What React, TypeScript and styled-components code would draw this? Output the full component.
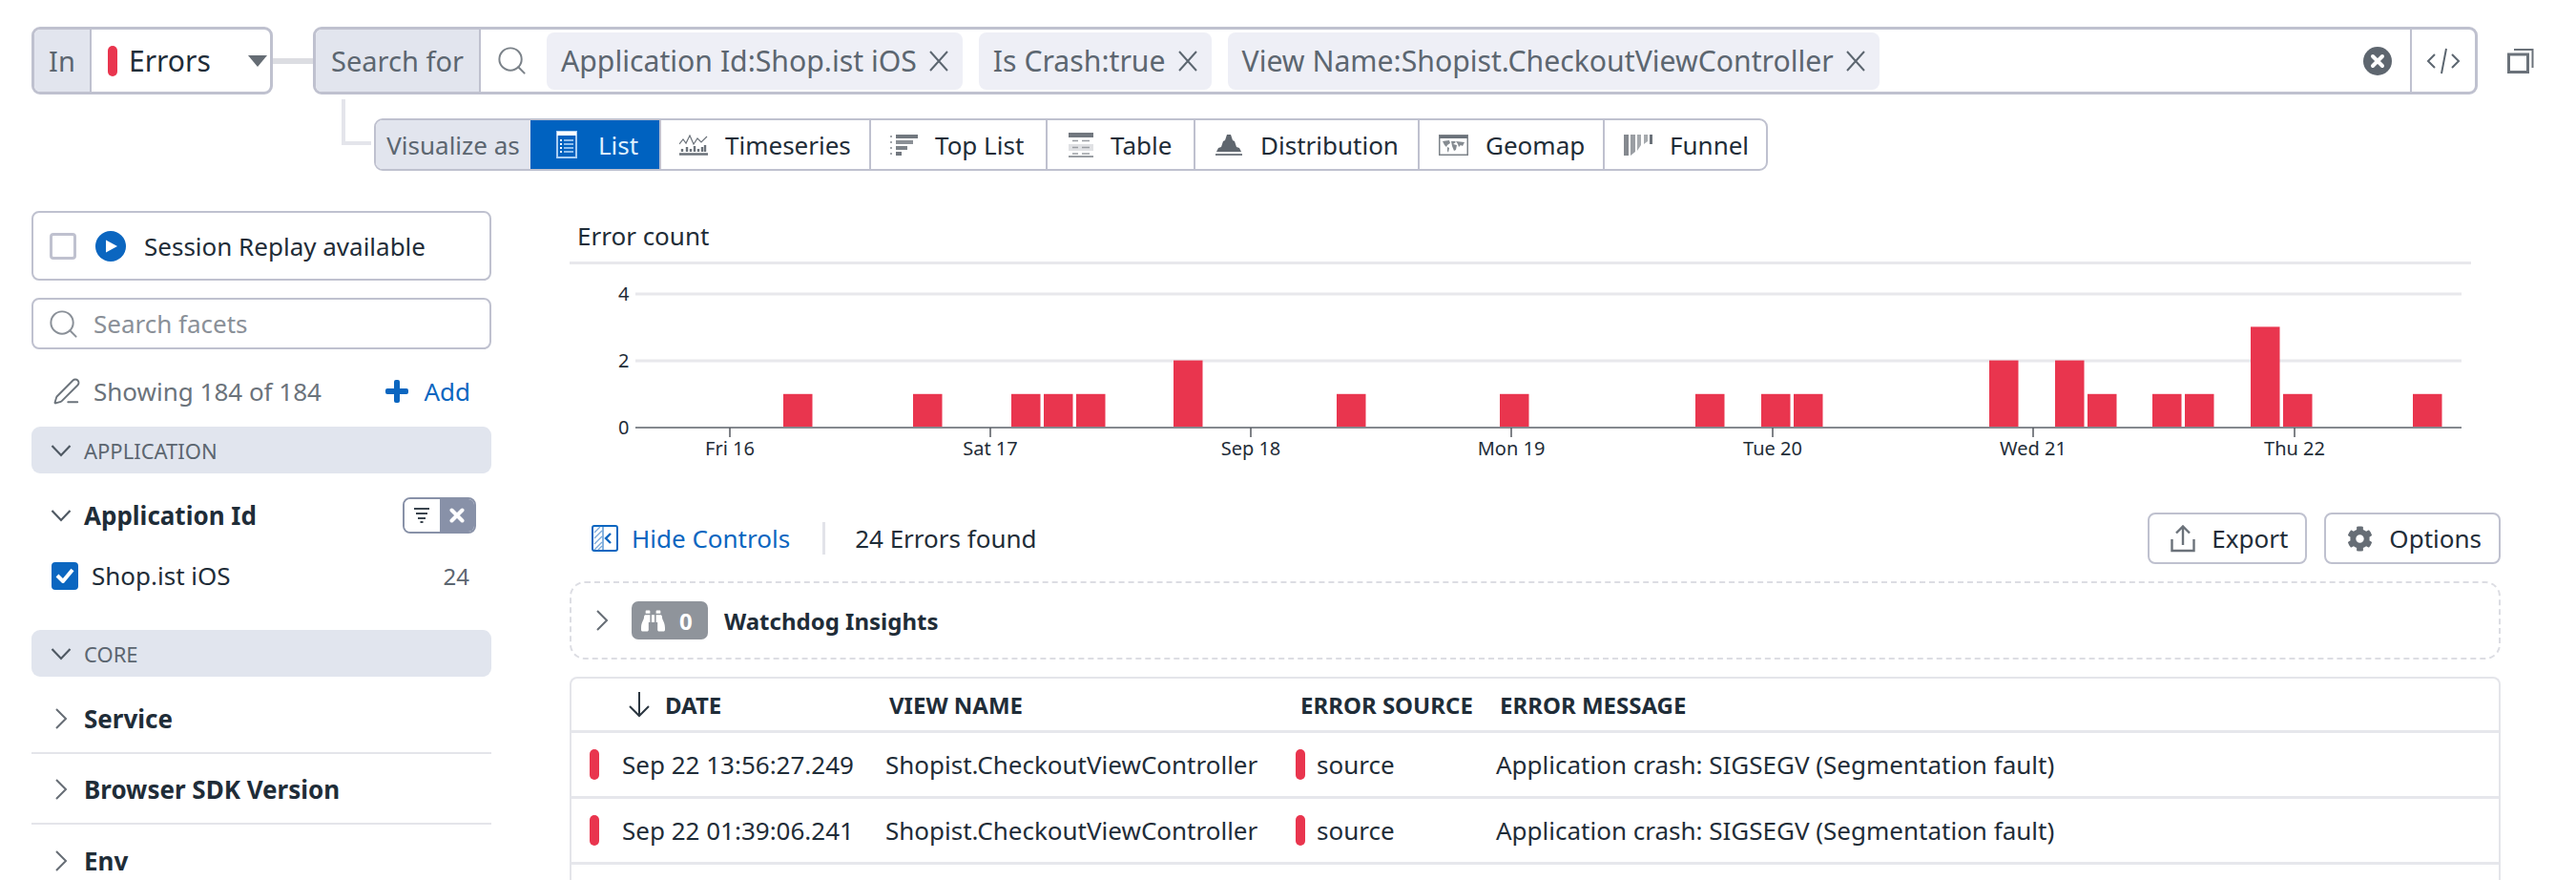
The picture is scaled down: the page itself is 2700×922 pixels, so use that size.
import React from 'react';
import styled, { createGlobalStyle } from 'styled-components';
import { FaBinoculars, FaCog } from 'react-icons/fa';
import { PenLine, Search } from 'lucide-react';

const LINE = '#bfc1cf';
const INK = '#1f2d38';
const MUTED = '#5c6670';
const BLUE = '#0b66c0';
const RED = '#e9354e';

const GlobalStyle = createGlobalStyle`
  html, body {
    margin: 0;
    height: 922px;
    overflow: hidden;
    background: #fff;
  }

  body {
    font-family: 'Noto Sans', 'Liberation Sans', sans-serif;
    color: ${INK};
  }
`;

const Page = styled.div`
  padding: 28px 0 0 33px;
`;

const QueryRow = styled.div`
  display: flex;
  align-items: stretch;
  height: 71px;
  font-size: 30px;
`;

const Group = styled.div<{ $width: number }>`
  display: flex;
  align-items: stretch;
  box-sizing: border-box;
  width: ${(p) => p.$width}px;
  border: 3px solid ${LINE};
  border-radius: 9px;
  overflow: hidden;
  background: #fff;
`;

const GroupLabel = styled.div<{ $width: number }>`
  display: flex;
  align-items: center;
  justify-content: center;
  box-sizing: border-box;
  flex: 0 0 ${(p) => p.$width}px;
  background: #e2e5ee;
  border-right: 2px solid ${LINE};
  color: ${MUTED};
  font-size: 29px;
`;

const Pill = styled.span<{ $height: number }>`
  display: block;
  flex: none;
  width: 10px;
  height: ${(p) => p.$height}px;
  border-radius: 5px;
  background: ${RED};
`;

const SourceSelect = styled.div`
  display: flex;
  flex: 1;
  align-items: center;
  padding-left: 17px;
  gap: 12px;
`;

const Caret = styled.span`
  width: 0;
  height: 0;
  margin-left: 27px;
  border-left: 10px solid transparent;
  border-right: 10px solid transparent;
  border-top: 12px solid #656c74;
`;

const Connector = styled.div`
  align-self: center;
  width: 42px;
  height: 6px;
  background: #dcdde2;
`;

const SearchField = styled.div`
  display: flex;
  flex: 1;
  align-items: center;
  padding-left: 15px;
  color: #7b8289;
`;

const Chip = styled.div`
  display: flex;
  align-items: center;
  height: 60px;
  padding: 0 14px 0 15px;
  margin-right: 17px;
  gap: 12px;
  border-radius: 8px;
  background: #eeeff6;
  color: ${MUTED};
  font-size: 30.2px;
  white-space: nowrap;
`;

const ChipList = styled.div`
  display: flex;
  flex: 1;
  margin-left: 19px;
`;

const ClearSlot = styled.div`
  display: flex;
  padding-right: 19px;
`;

const CodeSlot = styled.div`
  display: flex;
  flex: 0 0 68px;
  box-sizing: border-box;
  align-items: center;
  justify-content: center;
  border-left: 2px solid ${LINE};
`;

const CopyButton = styled.div`
  display: flex;
  align-items: center;
  margin-left: 31px;
`;

const VizRow = styled.div`
  position: relative;
  display: flex;
  height: 55px;
  margin: 25px 0 0 359px;
  font-size: 26px;

  &::before {
    content: '';
    position: absolute;
    left: -34px;
    top: -20px;
    width: 27px;
    height: 44px;
    border-left: 4px solid #e4e5eb;
    border-bottom: 4px solid #e4e5eb;
  }
`;

const VizGroup = styled.div`
  display: flex;
  align-items: stretch;
  box-sizing: border-box;
  height: 55px;
  border: 2px solid ${LINE};
  border-radius: 9px;
  overflow: hidden;
`;

const VizLabel = styled.div`
  display: flex;
  align-items: center;
  justify-content: center;
  width: 162px;
  background: #e2e5ee;
  color: ${MUTED};
`;

const VizTab = styled.div<{ $width: number; $pad: number }>`
  display: flex;
  align-items: center;
  gap: 18px;
  box-sizing: border-box;
  width: ${(p) => p.$width}px;
  padding-left: ${(p) => p.$pad}px;
  white-space: nowrap;
  border-left: 2px solid ${LINE};
`;

const ActiveTab = styled.div`
  display: flex;
  align-items: center;
  gap: 22px;
  box-sizing: border-box;
  width: 135px;
  margin: -2px 0;
  padding-left: 27px;
  background: #0062c0;
  color: #dff0ff;
`;

const Body = styled.div`
  display: grid;
  grid-template-columns: 482px 2024px;
  column-gap: 82px;
  margin-top: 42px;
`;

const Sidebar = styled.aside`
  display: flex;
  flex-direction: column;
  font-size: 26px;
`;

const SessionBox = styled.div`
  display: flex;
  align-items: center;
  box-sizing: border-box;
  height: 73px;
  padding-left: 17px;
  border: 2px solid ${LINE};
  border-radius: 8px;
`;

const EmptyCheck = styled.span`
  box-sizing: border-box;
  width: 28px;
  height: 28px;
  margin-right: 20px;
  border: 3px solid ${LINE};
  border-radius: 4px;
`;

const SessionText = styled.span`
  margin-left: 19px;
`;

const FacetSearch = styled.div`
  display: flex;
  align-items: center;
  gap: 14px;
  box-sizing: border-box;
  height: 54px;
  margin-top: 18px;
  padding-left: 14px;
  border: 2px solid ${LINE};
  border-radius: 8px;
  color: #8a9098;
`;

const ShowingRow = styled.div`
  display: flex;
  align-items: center;
  box-sizing: border-box;
  height: 81px;
  padding: 6px 22px 0;
  color: #6b737b;
  gap: 13px;
`;

const AddLink = styled.span`
  display: flex;
  align-items: center;
  gap: 16px;
  margin-left: auto;
  color: ${BLUE};
`;

const GroupHead = styled.div`
  display: flex;
  align-items: center;
  gap: 13px;
  height: 49px;
  padding-left: 20px;
  border-radius: 9px;
  background: #e1e5ee;
  color: ${MUTED};
  font-size: 22px;
`;

const FacetHead = styled.div`
  display: flex;
  align-items: center;
  gap: 13px;
  height: 88px;
  padding: 0 16px 0 20px;
  font-weight: 700;
`;

const FilterToggle = styled.div`
  display: flex;
  box-sizing: border-box;
  width: 77px;
  height: 38px;
  margin-left: auto;
  border: 2px solid #8891a8;
  border-radius: 8px;
  overflow: hidden;
`;

const ToggleHalf = styled.div<{ $solid?: boolean }>`
  display: flex;
  flex: 1;
  align-items: center;
  justify-content: center;
  background: ${(p) => (p.$solid ? '#8891a8' : '#fff')};
`;

const FacetValue = styled.div`
  display: flex;
  align-items: center;
  height: 38px;
  padding: 0 23px 0 21px;
  margin-bottom: 38px;
`;

const BlueCheck = styled.span`
  display: flex;
  align-items: center;
  justify-content: center;
  width: 28px;
  height: 29px;
  margin-right: 14px;
  border-radius: 4px;
  background: ${BLUE};
`;

const Count = styled.span`
  margin-left: auto;
  color: ${MUTED};
  font-size: 24px;
`;

const FacetList = styled.div`
  margin-top: 7px;
`;

const FacetRow = styled.div`
  display: flex;
  align-items: center;
  gap: 13px;
  box-sizing: border-box;
  height: 74px;
  padding: 1px 0 0 20px;
  border-bottom: 2px solid #e4e5ea;
  font-weight: 700;
  color: ${INK};

  &:last-child {
    border-bottom: 0;
  }
`;

const Main = styled.main`
  display: flex;
  flex-direction: column;
`;

const ChartTitle = styled.div`
  display: flex;
  align-items: center;
  box-sizing: border-box;
  width: 1993px;
  height: 56px;
  padding: 0 8px 2px;
  border-bottom: 3px solid #e8e8ec;
  font-size: 26px;
`;

const ChartSvg = styled.svg`
  display: block;
  flex: none;

  text {
    font-family: 'Noto Sans', 'Liberation Sans', sans-serif;
    font-size: 20px;
    fill: ${INK};
  }
`;

const Controls = styled.div`
  display: flex;
  align-items: center;
  height: 54px;
  padding-left: 23px;
  font-size: 26px;
`;

const HideLink = styled.span`
  display: flex;
  align-items: center;
  gap: 14px;
  padding-right: 34px;
  border-right: 3px solid #e2e3e9;
  color: ${BLUE};
  line-height: 34px;
`;

const Found = styled.span`
  margin-left: 31px;
`;

const ControlButton = styled.div`
  display: flex;
  align-items: center;
  gap: 17px;
  box-sizing: border-box;
  height: 54px;
  padding: 0 18px 0 22px;
  margin-left: 18px;
  border: 2px solid ${LINE};
  border-radius: 8px;

  &:first-of-type {
    margin-left: auto;
  }
`;

const WatchdogBox = styled.div`
  display: flex;
  align-items: center;
  box-sizing: border-box;
  height: 82px;
  margin-top: 18px;
  padding-left: 21px;
  border: 2px dashed #dcdde3;
  border-radius: 16px;
  font-size: 24px;
  font-weight: 700;
`;

const InsightBadge = styled.span`
  display: flex;
  align-items: center;
  gap: 15px;
  box-sizing: border-box;
  width: 80px;
  height: 40px;
  margin: 0 17px 0 20px;
  padding-left: 10px;
  border-radius: 7px;
  background: #8f949b;
  color: #fff;
`;

const Table = styled.div`
  margin-top: 18px;
  border: 2px solid #e4e5ea;
  border-bottom: 0;
  border-radius: 8px 8px 0 0;
`;

const Row = styled.div`
  display: grid;
  grid-template-columns: 329px 430px 210px 1fr;
  align-items: center;
  height: 69px;
  border-bottom: 3px solid #e6e7ec;
  box-sizing: border-box;
  font-size: 26px;
`;

const HeadRow = styled(Row)`
  height: 57px;
  font-size: 24px;
  font-weight: 700;
`;

const Cell = styled.div<{ $pad?: number }>`
  display: flex;
  align-items: center;
  padding-left: ${(p) => p.$pad ?? 0}px;
  white-space: nowrap;
`;

const SourceCell = styled(Cell)`
  gap: 12px;
`;

const DateCell = styled(Cell)`
  gap: 24px;
`;

const ArrowCell = styled(Cell)`
  gap: 16px;
`;

const FillerRow = styled.div`
  height: 40px;
`;

const ListIcon = () => (
  <svg width="22" height="29" viewBox="0 0 22 29" fill="none">
    <rect x="1" y="1" width="20" height="27" stroke="#a9cdf2" strokeWidth="2" />
    <rect x="1" y="1" width="20" height="4" fill="#fff" />
    <path d="M8 10h10M8 14h10M8 18h10M8 22h10" stroke="#8fbdec" strokeWidth="2" />
    <path d="M4 10h2M4 14h2M4 18h2M4 22h2" stroke="#fff" strokeWidth="2" />
  </svg>
);

const TimeseriesIcon = () => (
  <svg width="30" height="22" viewBox="0 0 30 22" fill="none" stroke="#6b727a">
    <path d="M0 10l4-5 3 4 4-8 4 9 4-6 4 4 6-6" strokeWidth="1.200" />
    <path d="M3 15v3M8 13v5M12 15v3M16 12v6M20 15v3M24 13v5M27 11v7" strokeWidth="2.400" />
    <path d="M0 20.500h30" strokeWidth="2.400" />
  </svg>
);

const TopListIcon = () => (
  <svg width="29" height="22" viewBox="0 0 29 22" fill="#72787f">
    <rect x="0" y="1" width="2" height="2" fill="#a2a6ab" />
    <rect x="6" y="0" width="23" height="4" />
    <rect x="0" y="7" width="2" height="2" fill="#a2a6ab" />
    <rect x="6" y="6" width="18" height="4" fill="#8b9096" />
    <rect x="0" y="13" width="2" height="2" fill="#a2a6ab" />
    <rect x="6" y="12" width="12" height="4" fill="#7d8389" />
    <rect x="0" y="19" width="2" height="2" fill="#a2a6ab" />
    <rect x="6" y="18" width="6" height="4" />
  </svg>
);

const TableIcon = () => (
  <svg width="26" height="26" viewBox="0 0 26 26" fill="#72787f">
    <rect x="0" y="0" width="26" height="5" />
    <rect x="0" y="12" width="26" height="7" fill="#e0e1e4" />
    <rect x="0" y="24" width="26" height="2" fill="#9a9ea3" />
    <path d="M4 8.500h6M14 8.500h8M4 15.500h6M14 15.500h8M4 22h6M14 22h8" stroke="#9a9ea3" strokeWidth="1.400" />
  </svg>
);

const DistributionIcon = () => (
  <svg width="30" height="22" viewBox="0 0 30 22" fill="#5f666e">
    <path d="M13 0h4l2 6 2 1 2 6 3 1 2 4H2l2-4 3-1 2-6 2-1z" />
    <rect x="1" y="20" width="28" height="2" fill="#777d84" />
  </svg>
);

const GeomapIcon = () => (
  <svg width="31" height="22" viewBox="0 0 31 22" fill="none">
    <rect x="0.750" y="0.750" width="29.500" height="20.500" stroke="#7d8389" strokeWidth="1.500" />
    <rect x="1" y="1" width="29" height="3" fill="#6b727a" />
    <path d="M4 7l7-1 1 3-3 2-1 2-2-2zM9 13l2 1-1 5-1-2zM13 7h4l1 1-3 2 4 1-1 5-2 1-2-5zM18 7l9 1-2 4-2-1-2 2-1-3z" fill="#858b91" />
  </svg>
);

const FunnelIcon = () => (
  <svg width="30" height="22" viewBox="0 0 30 22">
    <path d="M0 0h5v22H0z" fill="#85898f" />
    <path d="M7 0h5v18l-5 4z" fill="#9a9ea3" />
    <path d="M14 0h4v11l-4 6z" fill="#a6aaae" />
    <path d="M21 0h4v7l-4 3z" fill="#a6aaae" />
    <path d="M27 0h3v10h-3z" fill="#6b727a" />
  </svg>
);

const PlayBadge = () => (
  <svg width="32" height="32" viewBox="0 0 32 32">
    <circle cx="16" cy="16" r="16" fill={BLUE} />
    <path d="M11 9.500l12 6.500-12 6.500z" fill="#fff" />
  </svg>
);

const ClearIcon = () => (
  <svg width="30" height="30" viewBox="0 0 30 30">
    <circle cx="15" cy="15" r="15" fill="#5e666f" />
    <path d="M10 10l10 10M20 10L10 20" stroke="#fff" strokeWidth="4" strokeLinecap="round" />
  </svg>
);

const CodeIcon = () => (
  <svg width="36" height="28" viewBox="0 0 36 28" fill="none" stroke="#5c6670" strokeWidth="2">
    <path d="M9 7L2 14l7 7M27 7l7 7-7 7M21 1l-5 26" />
  </svg>
);

const CopyIcon = () => (
  <svg width="28" height="27" viewBox="0 0 28 27" fill="none" stroke="#6b727a" strokeWidth="3">
    <rect x="1.500" y="7" width="20" height="18.500" />
    <path d="M7 2h19.500v19" strokeWidth="2" />
  </svg>
);

const ChipCross = () => (
  <svg width="22" height="22" viewBox="0 0 22 22" fill="none" stroke="#5c6670" strokeWidth="2">
    <path d="M2 1l18 20M20 1L2 21" />
  </svg>
);

const PlusIcon = () => (
  <svg width="24" height="24" viewBox="0 0 24 24" fill={BLUE}>
    <rect x="9" y="0" width="6" height="24" rx="2" />
    <rect x="0" y="9" width="24" height="6" rx="2" />
  </svg>
);

const CheckMark = () => (
  <svg width="20" height="16" viewBox="0 0 20 16" fill="none">
    <path d="M2 8l6 6L18 2" stroke="#fff" strokeWidth="4" />
  </svg>
);

const FilterLines = () => (
  <svg width="18" height="16" viewBox="0 0 18 16" fill="none" stroke="#3a444e" strokeWidth="2">
    <path d="M1 1h16M3 6h12M5 11h8M7.500 15h3" />
  </svg>
);

const SmallCross = () => (
  <svg width="16" height="16" viewBox="0 0 16 16" fill="none">
    <path d="M2.500 2.500l11 11M13.500 2.500l-11 11" stroke="#fff" strokeWidth="4" strokeLinecap="round" />
  </svg>
);

const ExportIcon = () => (
  <svg width="26" height="29" viewBox="0 0 26 29" fill="none" stroke="#6b727a" strokeWidth="2.400">
    <path d="M1.500 15v12h23V15" />
    <path d="M13 21V2M6 8.500l7-7 7 7" />
  </svg>
);

const HideIcon = () => (
  <svg width="28" height="28" viewBox="0 0 28 28" fill="none">
    <rect x="1" y="1" width="26" height="26" rx="2" stroke={BLUE} strokeWidth="2" />
    <path d="M3 8l6-6M3 14l8-8M3 20l8-8M3 26l8-8M7 26l4-4" stroke="#7aa8d8" strokeWidth="1.300" />
    <path d="M12 1v26" stroke={BLUE} strokeWidth="1" />
    <path d="M20 9l-5 5 5 5" stroke={BLUE} strokeWidth="2.400" />
  </svg>
);

const ChevronOpen = () => (
  <svg width="22" height="22" viewBox="0 0 22 22" fill="none" stroke="#4f5963" strokeWidth="2.200">
    <path d="M1.500 6l9.500 10L20.500 6" />
  </svg>
);

const ChevronClosed = () => (
  <svg width="22" height="22" viewBox="0 0 22 22" fill="none" stroke="#666d75" strokeWidth="2">
    <path d="M6 1l10 10L6 21" />
  </svg>
);

const SortArrow = () => (
  <svg width="22" height="27" viewBox="0 0 22 27" fill="none" stroke="#2b3640" strokeWidth="2">
    <path d="M11 0v25M1 15l10 10 10-10" />
  </svg>
);

const bars: Array<[number, number]> = [
  [821, 1], [957, 1], [1060, 1], [1094, 1], [1128, 1], [1230, 2], [1401, 1], [1572, 1],
  [1777, 1], [1846, 1], [1880, 1], [2085, 2], [2154, 2], [2188, 1], [2256, 1], [2290, 1],
  [2359, 3], [2393, 1], [2529, 1]
];

const ticks: Array<[number, string]> = [
  [765, 'Fri 16'], [1038, 'Sat 17'], [1311, 'Sep 18'], [1584, 'Mon 19'],
  [1858, 'Tue 20'], [2131, 'Wed 21'], [2405, 'Thu 22']
];

const ErrorChart = () => (
  <ChartSvg width="2024" height="260" viewBox="597 277 2024 260">
    <path d="M666 308h1914M666 378h1914" stroke="#e8e8ec" strokeWidth="3" />
    {bars.map(([x, n]) => (
      <rect key={x} x={x} y={448 - n * 35.2} width="30.500" height={n * 35.2} fill={RED} />
    ))}
    <path d="M666 448h1914" stroke="#85898f" strokeWidth="2" />
    {ticks.map(([x, label]) => (
      <g key={x}>
        <path d={`M${x} 448v10`} stroke="#55595f" strokeWidth="1.500" />
        <text x={x} y="477" textAnchor="middle">{label}</text>
      </g>
    ))}
    <text x="648" y="315">4</text>
    <text x="648" y="385">2</text>
    <text x="648" y="455">0</text>
  </ChartSvg>
);

const tabs: Array<{ label: string; width: number; pad: number; icon: React.ReactElement }> = [
  { label: 'Timeseries', width: 220, pad: 19, icon: <TimeseriesIcon /> },
  { label: 'Top List', width: 185, pad: 20, icon: <TopListIcon /> },
  { label: 'Table', width: 155, pad: 22, icon: <TableIcon /> },
  { label: 'Distribution', width: 235, pad: 20, icon: <DistributionIcon /> },
  { label: 'Geomap', width: 194, pad: 20, icon: <GeomapIcon /> },
  { label: 'Funnel', width: 171, pad: 20, icon: <FunnelIcon /> }
];

const rows = [
  'Sep 22 13:56:27.249',
  'Sep 22 01:39:06.241'
];

export default function App (): React.ReactElement {
  return (
    <Page>
      <GlobalStyle />
      <QueryRow>
        <Group $width={253}>
          <GroupLabel $width={60}>In</GroupLabel>
          <SourceSelect>
            <Pill $height={32} />
            Errors
            <Caret />
          </SourceSelect>
        </Group>
        <Connector />
        <Group $width={2269}>
          <GroupLabel $width={173}>Search for</GroupLabel>
          <SearchField>
            <Search size={35} strokeWidth={1.35} />
            <ChipList>
              {['Application Id:Shop.ist iOS', 'Is Crash:true', 'View Name:Shopist.CheckoutViewController'].map((chip) => (
                <Chip key={chip}>
                  {chip}
                  <ChipCross />
                </Chip>
              ))}
            </ChipList>
            <ClearSlot><ClearIcon /></ClearSlot>
          </SearchField>
          <CodeSlot><CodeIcon /></CodeSlot>
        </Group>
        <CopyButton><CopyIcon /></CopyButton>
      </QueryRow>

      <VizRow>
        <VizGroup>
          <VizLabel>Visualize as</VizLabel>
          <ActiveTab><ListIcon />List</ActiveTab>
          {tabs.map((tab) => (
            <VizTab key={tab.label} $width={tab.width} $pad={tab.pad}>
              {tab.icon}
              {tab.label}
            </VizTab>
          ))}
        </VizGroup>
      </VizRow>

      <Body>
        <Sidebar>
          <SessionBox>
            <EmptyCheck />
            <PlayBadge />
            <SessionText>Session Replay available</SessionText>
          </SessionBox>
          <FacetSearch>
            <Search size={35} strokeWidth={1.35} />
            Search facets
          </FacetSearch>
          <ShowingRow>
            <PenLine size={30} strokeWidth={1.5} />
            Showing 184 of 184
            <AddLink><PlusIcon />Add</AddLink>
          </ShowingRow>
          <GroupHead><ChevronOpen />APPLICATION</GroupHead>
          <FacetHead>
            <ChevronOpen />
            Application Id
            <FilterToggle>
              <ToggleHalf><FilterLines /></ToggleHalf>
              <ToggleHalf $solid><SmallCross /></ToggleHalf>
            </FilterToggle>
          </FacetHead>
          <FacetValue>
            <BlueCheck><CheckMark /></BlueCheck>
            Shop.ist iOS
            <Count>24</Count>
          </FacetValue>
          <GroupHead><ChevronOpen />CORE</GroupHead>
          <FacetList>
            {['Service', 'Browser SDK Version', 'Env'].map((name) => (
              <FacetRow key={name}>
                <ChevronClosed />
                {name}
              </FacetRow>
            ))}
          </FacetList>
        </Sidebar>

        <Main>
          <ChartTitle>Error count</ChartTitle>
          <ErrorChart />
          <Controls>
            <HideLink><HideIcon />Hide Controls</HideLink>
            <Found>24 Errors found</Found>
            <ControlButton><ExportIcon />Export</ControlButton>
            <ControlButton><FaCog size={27} color="#666d75" />Options</ControlButton>
          </Controls>
          <WatchdogBox>
            <ChevronClosed />
            <InsightBadge><FaBinoculars size={25} />0</InsightBadge>
            Watchdog Insights
          </WatchdogBox>
          <Table>
            <HeadRow>
              <ArrowCell $pad={60}><SortArrow />DATE</ArrowCell>
              <Cell $pad={4}>VIEW NAME</Cell>
              <Cell $pad={5}>ERROR SOURCE</Cell>
              <Cell $pad={4}>ERROR MESSAGE</Cell>
            </HeadRow>
            {rows.map((date) => (
              <Row key={date}>
                <DateCell $pad={19}><Pill $height={32} />{date}</DateCell>
                <Cell>Shopist.CheckoutViewController</Cell>
                <SourceCell><Pill $height={32} />source</SourceCell>
                <Cell>Application crash: SIGSEGV (Segmentation fault)</Cell>
              </Row>
            ))}
            <FillerRow />
          </Table>
        </Main>
      </Body>
    </Page>
  );
}
